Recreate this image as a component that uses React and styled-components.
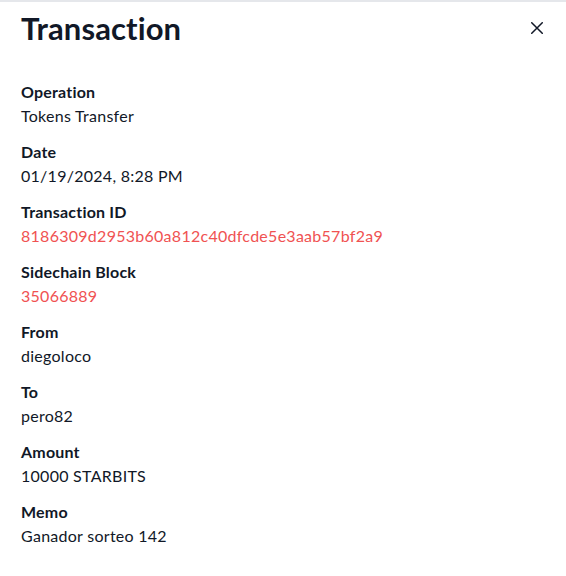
import React from 'react'
import styled, { createGlobalStyle } from 'styled-components'

const GlobalStyle = createGlobalStyle`
	html, body {
		margin: 0;
		padding: 0;
		background: #fff;
	}
	body {
		font-family: Lato, "Noto Sans", sans-serif;
		color: #111827;
	}
`

const Panel = styled.div`
	width: 566px;
	height: 576px;
	box-sizing: border-box;
	border-top: 2px solid #e5e7eb;
	background: #fff;
	padding: 7px 21px 0 21px;
`

const Header = styled.div`
	display: flex;
	align-items: center;
	justify-content: space-between;
	height: 38px;
`

const Title = styled.h2`
	margin: 0;
	font-size: 31px;
	line-height: 38px;
	font-weight: 700;
	letter-spacing: 0.1px;
	color: #111827;
`

const CloseButton = styled.button`
	display: flex;
	align-items: center;
	justify-content: center;
	width: 16px;
	height: 16px;
	padding: 0;
	border: 0;
	background: none;
	color: #111827;
	cursor: pointer;
`

const Fields = styled.dl`
	display: flex;
	flex-direction: column;
	gap: 12px;
	margin: 33px 0 0;
`

const Field = styled.div`
	display: flex;
	flex-direction: column;
`

const Label = styled.dt`
	font-size: 16px;
	line-height: 24px;
	font-weight: 700;
	letter-spacing: 0.2px;
`

const Value = styled.dd`
	margin: 0;
	font-size: 16px;
	line-height: 24px;
	letter-spacing: 0.27px;
	color: ${p => (p.$link ? '#f05252' : '#111827')};
`

const rows = [
	{ label: 'Operation', value: 'Tokens Transfer' },
	{ label: 'Date', value: '01/19/2024, 8:28 PM' },
	{ label: 'Transaction ID', value: '8186309d2953b60a812c40dfcde5e3aab57bf2a9', link: true },
	{ label: 'Sidechain Block', value: '35066889', link: true },
	{ label: 'From', value: 'diegoloco' },
	{ label: 'To', value: 'pero82' },
	{ label: 'Amount', value: '10000 STARBITS' },
	{ label: 'Memo', value: 'Ganador sorteo 142' }
]

export default function App() {
	return (
		<>
			<GlobalStyle />
			<Panel>
				<Header>
					<Title>Transaction</Title>
					<CloseButton aria-label="Close">
						<svg width="12" height="12" viewBox="0 0 12 12" fill="none" stroke="currentColor" strokeWidth="1.5" strokeLinecap="round">
							<path d="M0.75 0.75l10.5 10.5M11.25 0.75L0.75 11.25" />
						</svg>
					</CloseButton>
				</Header>
				<Fields>
					{rows.map(row => (
						<Field key={row.label}>
							<Label>{row.label}</Label>
							<Value $link={row.link}>{row.value}</Value>
						</Field>
					))}
				</Fields>
			</Panel>
		</>
	)
}
